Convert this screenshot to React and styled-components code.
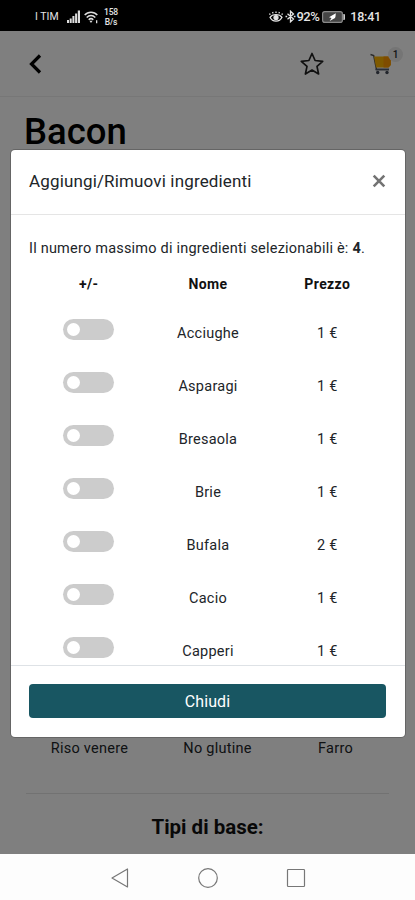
import React, { useState } from 'react';
import styled, { createGlobalStyle } from 'styled-components';

const GlobalStyle = createGlobalStyle`
  * {
    box-sizing: border-box;
  }
  body {
    margin: 0;
    font-family: Roboto, "Liberation Sans", sans-serif;
    color: #212529;
  }
`;

const Phone = styled.div`
  width: 415px;
  height: 900px;
  display: flex;
  flex-direction: column;
  overflow: hidden;
  background: #fff;
`;

const StatusBar = styled.div`
  height: 31px;
  flex-shrink: 0;
  display: flex;
  align-items: center;
  justify-content: space-between;
  padding: 2px 34px 0 35px;
  background: #000;
  color: #e4e4e4;
  font-size: 12.5px;
`;

const StatusGroup = styled.div`
  display: flex;
  align-items: center;
  white-space: nowrap;
`;

const Carrier = styled.span`
  width: 32px;
  font-size: 10.5px;
`;

const NetSpeed = styled.span`
  margin-left: 6px;
  font-size: 8.5px;
  font-weight: 500;
  line-height: 10px;
  letter-spacing: -0.2px;
  text-align: center;
`;

const Percent = styled.span`
  font-size: 13px;
  font-weight: 500;
  letter-spacing: -0.5px;
`;

const Clock = styled.span`
  margin-left: 5px;
  font-weight: 500;
  letter-spacing: -0.2px;
`;

const Page = styled.div`
  position: relative;
  flex: 1;
  min-height: 0;
  display: flex;
  flex-direction: column;
`;

const TopBar = styled.div`
  height: 66px;
  flex-shrink: 0;
  display: flex;
  align-items: center;
  padding: 0 23px 0 26px;
  border-bottom: 1px solid #eee;
`;

const Spacer = styled.div`
  flex: 1;
`;

const CartWrap = styled.div`
  position: relative;
  display: flex;
  margin-left: 46px;
`;

const CartBadge = styled.span`
  position: absolute;
  top: -6px;
  right: -11px;
  width: 15px;
  height: 15px;
  border-radius: 50%;
  background: #eaeaea;
  font-size: 10px;
  font-weight: 500;
  line-height: 15px;
  text-align: center;
`;

const ProductTitle = styled.h1`
  margin: 10px 24px 0;
  color: #000;
  font-size: 36.5px;
  font-weight: 500;
  line-height: 50px;
`;

const BaseOptions = styled.div`
  margin-top: auto;
  display: grid;
  grid-template-columns: 129px 127px 109px;
  padding: 0 25px;
  color: #212529;
  font-size: 14.5px;
  line-height: 20px;
  letter-spacing: 0.25px;
  text-align: center;
`;

const Divider = styled.hr`
  width: 363px;
  height: 1px;
  margin: 34px auto 21px;
  border: 0;
  background: #e5e5e5;
`;

const SectionTitle = styled.h2`
  margin: 0 0 15px;
  color: #111;
  font-size: 20.5px;
  font-weight: 700;
  line-height: 24px;
  text-align: center;
`;

const Backdrop = styled.div`
  position: absolute;
  inset: 0;
  background: rgba(0, 0, 0, 0.5);
`;

const Modal = styled.div`
  position: absolute;
  top: 119px;
  left: 11px;
  width: 394px;
  height: 587px;
  display: flex;
  flex-direction: column;
  border-radius: 4px;
  background: #fff;
  box-shadow: 0 0 0 1px rgba(0, 0, 0, 0.2);
`;

const ModalHeader = styled.div`
  height: 65px;
  flex-shrink: 0;
  display: flex;
  align-items: center;
  justify-content: space-between;
  padding: 0 19px 2px 18px;
  border-bottom: 1px solid #e5e5e5;
`;

const ModalTitle = styled.h3`
  margin: 0;
  font-size: 17px;
  font-weight: 400;
  letter-spacing: 0.15px;
`;

const CloseButton = styled.button`
  display: flex;
  padding: 0;
  border: 0;
  background: none;
  cursor: pointer;
`;

const ModalBody = styled.div`
  flex: 1;
  min-height: 0;
  overflow: hidden;
  padding: 24px 18px 0;
  font-size: 14.5px;
  letter-spacing: 0.25px;
`;

const Hint = styled.p`
  margin: 0;
  line-height: 20px;
  letter-spacing: 0.21px;
  white-space: nowrap;
`;

const Row = styled.div`
  display: grid;
  grid-template-columns: repeat(3, 1fr);
  height: 53px;
  align-items: center;
  justify-items: center;
`;

const HeadRow = styled(Row)`
  height: 48px;
  padding-top: 1px;
  color: #111;
  font-size: 14px;
  font-weight: 700;
  letter-spacing: 0.4px;
`;

const Toggle = styled.button`
  width: 51px;
  height: 21px;
  margin-bottom: 9px;
  padding: 4px;
  display: flex;
  justify-content: ${({ $on }) => ($on ? 'flex-end' : 'flex-start')};
  border: 0;
  border-radius: 11px;
  background: ${({ $on }) => ($on ? '#185662' : '#ccc')};
  cursor: pointer;
`;

const Knob = styled.span`
  width: 13px;
  height: 13px;
  border-radius: 50%;
  background: #fff;
`;

const ModalFooter = styled.div`
  height: 72px;
  flex-shrink: 0;
  padding: 18px;
  border-top: 1px solid #dee2e6;
`;

const PrimaryButton = styled.button`
  width: 357px;
  height: 34px;
  padding: 0;
  border: 0;
  border-radius: 4px;
  background: #185662;
  color: #fff;
  font-family: inherit;
  font-size: 16px;
  letter-spacing: 0.1px;
  cursor: pointer;
`;

const NavBar = styled.div`
  height: 46px;
  flex-shrink: 0;
  display: grid;
  grid-template-columns: repeat(3, 88px);
  align-items: center;
  justify-content: center;
  justify-items: center;
  padding-top: 1px;
  background: #fdfdfd;
`;

const SignalIcon = () => (
  <svg width="13" height="13" viewBox="0 0 13 13" fill="#ddd">
    <path d="M0 10h2v3H0zM2.7 8.5h2V13h-2zM5.4 6h2v7h-2zM8.1 3.5h2V13h-2zM10.8 0.5H13V13h-2.2z" />
  </svg>
);

const WifiIcon = () => (
  <svg width="14" height="14" viewBox="0 0 14 14" fill="none" stroke="#ddd" strokeWidth="1.5" style={{ marginLeft: 4 }}>
    <path d="M0.7 5C4 1.2 10 1.2 13.3 5M2.7 7.4c2.5-2.6 6.1-2.6 8.6 0M4.7 9.7c1.4-1.3 3.2-1.3 4.6 0" />
    <path d="M5.4 10.8h3.2L7 13zM12 10.2h1.3v3H12z" fill="#ddd" stroke="none" />
  </svg>
);

const EyeIcon = () => (
  <svg width="14" height="12" viewBox="0 0 14 12" fill="none" stroke="#e4e4e4" strokeWidth="1.3">
    <path d="M1 6.3C3.5 2.7 10.5 2.7 13 6.3 10.5 11.5 3.5 11.5 1 6.3zM1.2 3.8L0.5 2.5M4 2.4L3.6 1M7 2V0.5M10 2.4l.4-1.4M12.8 3.8l.7-1.3" />
    <circle cx="7" cy="6.6" r="2" fill="#e4e4e4" />
  </svg>
);

const BluetoothIcon = () => (
  <svg width="11" height="13" viewBox="0 0 11 13" fill="none" stroke="#e4e4e4" strokeWidth="1.3" style={{ marginLeft: 2 }}>
    <path d="M2.5 3.8l6 5.2-3 2.8V1.2l3 2.8-6 5.2M0.5 6.5h1.7M8.8 6.5h1.7" />
  </svg>
);

const BatteryIcon = () => (
  <svg width="23" height="12" viewBox="0 0 23 12" style={{ marginLeft: 3 }}>
    <rect x="0.6" y="0.6" width="19.8" height="10.8" rx="2.2" fill="#444" stroke="#888" strokeWidth="1.2" />
    <path d="M21.3 3h.7q1 0 1 1v4q0 1-1 1h-.7z" fill="#ccc" />
    <path d="M13.8 2.3L7 6.2l2.5.7-1.8 3.1 5.3-3 .5-1.4z" fill="#fff" />
  </svg>
);

const BackIcon = () => (
  <svg width="18" height="20" viewBox="0 0 18 20" fill="none" stroke="#000" strokeWidth="3.2">
    <path d="M14 1.5L5.5 10l8.5 8.5" />
  </svg>
);

const StarIcon = () => (
  <svg width="24" height="24" viewBox="0 0 24 24" fill="none" stroke="#222" strokeWidth="1.7" strokeLinejoin="round">
    <path d="M12 1.5l3.1 7 7.6.8-5.7 5.1 1.6 7.6-6.6-3.9L5.4 22 7 14.4 1.3 9.3l7.6-.8z" />
  </svg>
);

const CartIcon = () => (
  <svg width="22" height="22" viewBox="0 0 22 22">
    <path d="M0.5 1.5l3.2 1L6.5 16.5H19" fill="none" stroke="#555" strokeWidth="1.4" />
    <path d="M4 3.5h15.5l1.3 1.5v7L18.5 14.5H6z" fill="#ffb400" />
    <path d="M13.5 3.5h6l1.3 1.5v7l-2.300 2.500h-5z" fill="#ff9800" />
    <path d="M5.5 16.5H19" stroke="#555e70" strokeWidth="1.6" />
    <circle cx="7.7" cy="19.5" r="1.7" fill="#444b58" />
    <circle cx="17" cy="19.5" r="1.7" fill="#444b58" />
  </svg>
);

const CloseIcon = () => (
  <svg width="14" height="14" viewBox="0 0 14 14" stroke="#737373" strokeWidth="2.6">
    <path d="M1.7 1.7l10.6 10.6M12.3 1.7L1.7 12.3" />
  </svg>
);

const NavIcon = ({ children }) => (
  <svg width="22" height="22" viewBox="0 0 22 22" fill="none" stroke="#777" strokeWidth="1.2" strokeLinejoin="round">
    {children}
  </svg>
);

const ingredients = [
  { name: 'Acciughe', price: 1 },
  { name: 'Asparagi', price: 1 },
  { name: 'Bresaola', price: 1 },
  { name: 'Brie', price: 1 },
  { name: 'Bufala', price: 2 },
  { name: 'Cacio', price: 1 },
  { name: 'Capperi', price: 1 },
];

const MAX_SELECTED = 4;

const App = () => {
  const [isOpen, setOpen] = useState(true);
  const [selected, setSelected] = useState([]);

  const toggle = (name) => {
    if (selected.includes(name)) {
      setSelected(selected.filter((item) => item !== name));
    } else if (selected.length < MAX_SELECTED) {
      setSelected([...selected, name]);
    }
  };

  return (
    <Phone>
      <GlobalStyle />
      <StatusBar>
        <StatusGroup>
          <Carrier>I TIM</Carrier>
          <SignalIcon />
          <WifiIcon />
          <NetSpeed>158<br />B/s</NetSpeed>
        </StatusGroup>
        <StatusGroup>
          <EyeIcon />
          <BluetoothIcon />
          <Percent>92%</Percent>
          <BatteryIcon />
          <Clock>18:41</Clock>
        </StatusGroup>
      </StatusBar>

      <Page>
        <TopBar>
          <BackIcon />
          <Spacer />
          <StarIcon />
          <CartWrap>
            <CartIcon />
            <CartBadge>1</CartBadge>
          </CartWrap>
        </TopBar>
        <ProductTitle>Bacon</ProductTitle>
        <BaseOptions>
          <span>Riso venere</span>
          <span>No glutine</span>
          <span>Farro</span>
        </BaseOptions>
        <Divider />
        <SectionTitle>Tipi di base:</SectionTitle>

        {isOpen && (
          <>
            <Backdrop />
            <Modal>
              <ModalHeader>
                <ModalTitle>Aggiungi/Rimuovi ingredienti</ModalTitle>
                <CloseButton onClick={() => setOpen(false)}>
                  <CloseIcon />
                </CloseButton>
              </ModalHeader>
              <ModalBody>
                <Hint>
                  Il numero massimo di ingredienti selezionabili è: <b>{MAX_SELECTED}</b>.
                </Hint>
                <HeadRow>
                  <span>+/-</span>
                  <span>Nome</span>
                  <span>Prezzo</span>
                </HeadRow>
                {ingredients.map(({ name, price }) => (
                  <Row key={name}>
                    <Toggle $on={selected.includes(name)} onClick={() => toggle(name)}>
                      <Knob />
                    </Toggle>
                    <span>{name}</span>
                    <span>{price} €</span>
                  </Row>
                ))}
              </ModalBody>
              <ModalFooter>
                <PrimaryButton onClick={() => setOpen(false)}>Chiudi</PrimaryButton>
              </ModalFooter>
            </Modal>
          </>
        )}
      </Page>

      <NavBar>
        <NavIcon>
          <path d="M18.5 2v18L3 11z" />
        </NavIcon>
        <NavIcon>
          <circle cx="11" cy="11" r="9.3" />
        </NavIcon>
        <NavIcon>
          <rect x="2.5" y="2.5" width="17" height="17" rx="0.8" />
        </NavIcon>
      </NavBar>
    </Phone>
  );
};

export default App;
